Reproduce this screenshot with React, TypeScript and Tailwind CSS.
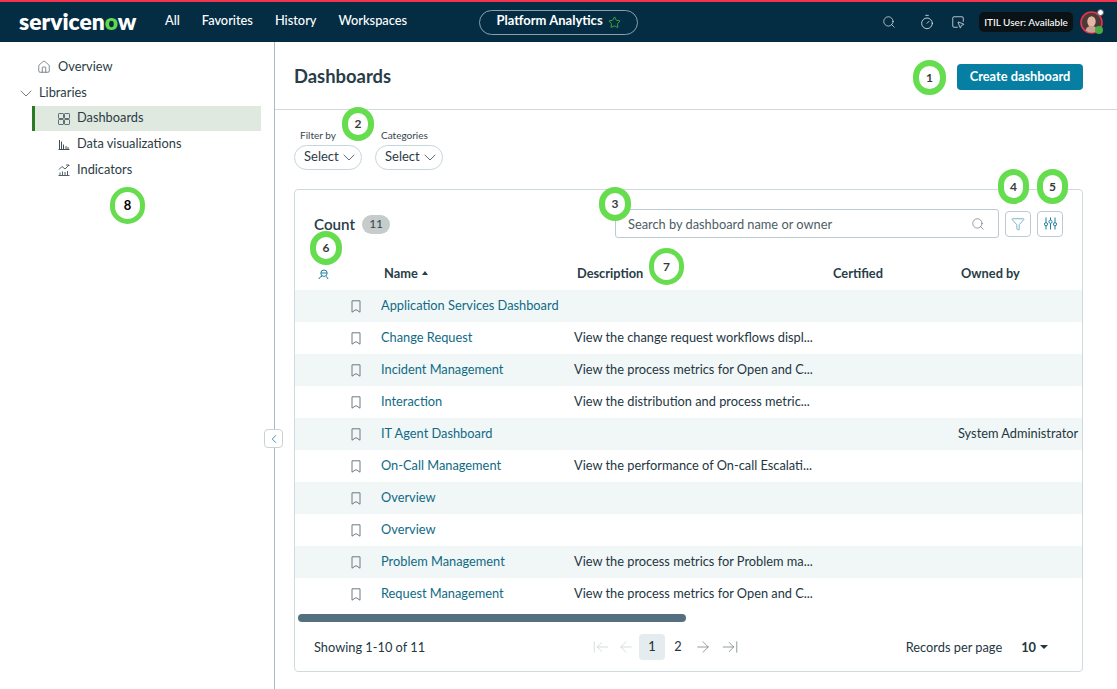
import { ArrowLeft, ArrowLeftToLine, ArrowRight, ArrowRightToLine, ChevronLeft, Filter, House, Search, Star, SquareMousePointer, Timer } from 'lucide-react';

const rows = [
  { name: 'Application Services Dashboard', desc: '', owner: '' },
  { name: 'Change Request', desc: 'View the change request workflows displ...', owner: '' },
  { name: 'Incident Management', desc: 'View the process metrics for Open and C...', owner: '' },
  { name: 'Interaction', desc: 'View the distribution and process metric...', owner: '' },
  { name: 'IT Agent Dashboard', desc: '', owner: 'System Administrator' },
  { name: 'On-Call Management', desc: 'View the performance of On-call Escalati...', owner: '' },
  { name: 'Overview', desc: '', owner: '' },
  { name: 'Overview', desc: '', owner: '' },
  { name: 'Problem Management', desc: 'View the process metrics for Problem ma...', owner: '' },
  { name: 'Request Management', desc: 'View the process metrics for Open and C...', owner: '' },
];

// numbered callouts that sit on top of the screenshot
const markers = [
  { n: 1, pos: 'left-[913px] top-[60px] h-[35px] w-[33px] border-[6px] text-[12px] text-[#3b3b3b]' },
  { n: 2, pos: 'left-[342px] top-[107px] h-[34px] w-[32px] border-[6px] text-[12px] text-[#3b3b3b]' },
  { n: 3, pos: 'left-[599px] top-[187px] h-[34px] w-[32px] border-[6px] text-[12px] text-[#3b3b3b]' },
  { n: 4, pos: 'left-[998px] top-[169px] h-[35px] w-[31px] border-[6px] text-[12px] text-[#3b3b3b]' },
  { n: 5, pos: 'left-[1037px] top-[169px] h-[35px] w-[31px] border-[6px] text-[12px] text-[#3b3b3b]' },
  { n: 6, pos: 'left-[310px] top-[231px] h-[34px] w-[32px] border-[6px] text-[12px] text-[#3b3b3b]' },
  { n: 7, pos: 'left-[649px] top-[248px] h-[37px] w-[35px] border-[5px] text-[12px] text-[#3b3b3b]' },
  { n: 8, pos: 'left-[110px] top-[187px] h-[37px] w-[35px] border-[5px] text-[13px] text-black' },
];

function ChevronIcon({ color }: { color: string }) {
  return (
    <svg width="12" height="7" viewBox="0 0 12 7" fill="none" stroke={color} strokeWidth="0.9">
      <path d="M.7.8 6 6l5.3-5.2" />
    </svg>
  );
}

function BookmarkIcon() {
  return (
    <svg width="10" height="13" viewBox="0 0 10 13" fill="none" stroke="#6f7b81" strokeWidth="1">
      <path d="M1 .8h8v11.4L5 9.6l-4 2.6z" />
    </svg>
  );
}

function GridIcon() {
  return (
    <svg width="12" height="12" viewBox="0 0 12 12" fill="none" stroke="#5f6e75" strokeWidth="1">
      <rect x=".5" y=".5" width="5" height="5" rx=".6" />
      <rect x="6.5" y=".5" width="5" height="5" rx=".6" />
      <rect x=".5" y="6.5" width="5" height="5" rx=".6" />
      <rect x="6.5" y="6.5" width="5" height="5" rx=".6" />
    </svg>
  );
}

function BarsIcon() {
  return (
    <svg width="12" height="12" viewBox="0 0 12 12" fill="none" stroke="#3f4e55" strokeWidth="1">
      <path d="M.5 11.5h11M1.5 11V2M3.5 11V3.5M5.5 11V6.5M8 11V8M10 11V9" />
    </svg>
  );
}

function IndicatorIcon() {
  return (
    <svg width="12" height="12" viewBox="0 0 12 12" fill="none" stroke="#3f4e55" strokeWidth=".9">
      <path d="M.5 11.5h11M2 11V8.5M4.5 11V7.5M7 11V8M9.5 11V7M1 5.5l3-3 3 2.5 4-4M8 1h3v1" />
    </svg>
  );
}

function PersonalizeIcon() {
  return (
    <svg width="11" height="11" viewBox="0 0 11 11" fill="none" stroke="#1d7f9e" strokeWidth="1">
      <circle cx="6" cy="4.2" r="3.2" />
      <path d="M1 10c.4-1.6 1.5-2.4 3-2.6M8 7.5c1 .4 1.7 1.2 2 2.5M3 4h6" />
    </svg>
  );
}

function SlidersIcon() {
  return (
    <svg width="13" height="13" viewBox="0 0 13 13" fill="none" stroke="#1d7f9e" strokeWidth="1">
      <path d="M2 .5v5M2 9v3.5M6.5.5V3M6.5 6.5v6M11 .5v5M11 9v3.5" />
      <circle cx="2" cy="7.2" r="1.6" />
      <circle cx="6.5" cy="4.7" r="1.6" />
      <circle cx="11" cy="7.2" r="1.6" />
    </svg>
  );
}

function Avatar() {
  return (
    <div className="relative h-[23px] w-[23px]">
      <svg width="23" height="23" viewBox="0 0 23 23">
        <circle cx="11.5" cy="11.5" r="10.5" fill="#4b3a35" stroke="#ee2f4b" strokeWidth="1.6" />
        <ellipse cx="11.5" cy="10.5" rx="4.2" ry="5.2" fill="#e2b7a3" />
        <path d="M5.5 19.5c1-3.5 3-4.5 6-4.5s5 1 6 4.5a10 10 0 0 1-12 0z" fill="#c9a295" />
      </svg>
      <span className="absolute right-[-1px] top-[-2px] h-[7px] w-[7px] rounded-full border border-[#4b5f6a] bg-white" />
      <span className="absolute bottom-0 right-0 h-[8px] w-[8px] rounded-full bg-[#49a942]" />
    </div>
  );
}

function SelectBox({ label }: { label: string }) {
  return (
    <div className="flex flex-col">
      <span className="pl-[6px] text-[10px] leading-[13px] text-[#36474f]">{label}</span>
      <div className="mt-[3px] flex h-[25px] w-[68px] items-center gap-[4px] rounded-full border border-[#c7d6dc] pl-[9px] text-[13px] text-[#2b3c45]">
        <span className="mb-[2px]">Select</span>
        <ChevronIcon color="#4c5d66" />
      </div>
    </div>
  );
}

export default function App() {
  return (
    <div className="relative h-[689px] w-[1117px] overflow-hidden bg-white font-['Lato',sans-serif] text-[#25363f]">
      {/* top bar */}
      <header className="flex h-[42px] items-center border-t-2 border-[#f2324e] bg-[#042d44] text-white">
        <div className="ml-[19px] mb-[2px] w-[146px] text-[22.8px] font-extrabold leading-none">
          servicen<span className="text-[#62d84e]">o</span>w
        </div>
        <nav className="mb-[2px] flex items-center gap-[22px] text-[12.8px] font-medium">
          <span>All</span>
          <span>Favorites</span>
          <span>History</span>
          <span>Workspaces</span>
        </nav>
        <div className="ml-[72px] flex h-[25px] w-[159px] items-center justify-center gap-[5px] rounded-full border border-[#8ca0ac] text-[13px] font-bold">
          <span className="mb-[2px]">Platform Analytics</span>
          <Star size={13} strokeWidth={1.5} className="text-[#45c13a]" />
        </div>
        <div className="ml-auto flex items-center pr-[14px]">
          <Search size={14} strokeWidth={1.1} />
          <Timer size={16} strokeWidth={1.1} className="ml-[23px]" />
          <SquareMousePointer size={14} strokeWidth={1.2} className="ml-[16px]" />
          <div className="ml-[14px] flex h-[20px] w-[94px] items-center justify-center rounded-[5px] bg-[#0b1216] text-[10px] font-medium">
            ITIL User: Available
          </div>
          <div className="ml-[7px]">
            <Avatar />
          </div>
        </div>
      </header>

      <div className="flex h-[647px]">
        {/* left nav */}
        <aside className="w-[275px] shrink-0 border-r border-[#a9bac2] pt-[12px] text-[12.8px] text-[#2b3c45]">
          <div className="flex h-[26px] items-center pl-[37px]">
            <House size={14} strokeWidth={1} />
            <span className="ml-[7px]">Overview</span>
          </div>
          <div className="flex h-[26px] items-center pl-[20px]">
            <ChevronIcon color="#5f6e75" />
            <span className="ml-[7px]">Libraries</span>
          </div>
          <div className="ml-[32px] flex h-[25px] w-[229px] items-center border-l-[3px] border-[#2d7a25] bg-[#e0e9df] pl-[23px]">
            <GridIcon />
            <span className="mb-[2px] ml-[7px]">Dashboards</span>
          </div>
          <div className="flex h-[26px] items-center pl-[58px]">
            <BarsIcon />
            <span className="ml-[7px]">Data visualizations</span>
          </div>
          <div className="flex h-[26px] items-center pl-[58px]">
            <IndicatorIcon />
            <span className="ml-[7px]">Indicators</span>
          </div>
        </aside>

        {/* main */}
        <main className="min-w-0 flex-1">
          <div className="flex h-[68px] items-center justify-between border-b border-[#d4d8da] pl-[19px] pr-[34px] pt-[2px]">
            <h1 className="mt-[1px] text-[18.4px] font-bold text-[#283d48]">Dashboards</h1>
            <button className="h-[26px] w-[126px] rounded-[4px] bg-[#067fa3] pt-[1px] text-[12.8px] font-bold text-white">
              Create dashboard
            </button>
          </div>

          <div className="ml-[19px] mt-[19px] flex gap-[13px]">
            <SelectBox label="Filter by" />
            <SelectBox label="Categories" />
          </div>

          <section className="ml-[19px] mt-[19px] h-[483px] w-[789px] rounded-[4px] border border-[#cfdade]">
            <div className="flex h-[68px] items-start pl-[19px] pt-[19px]">
              <div className="mt-[4px] flex items-center">
                <span className="text-[15.2px] font-semibold text-[#283d48]">Count</span>
                <span className="ml-[7px] flex h-[19px] w-[28px] items-center justify-center rounded-full bg-[#c6cbcc] text-[12px] text-[#34444c]">
                  11
                </span>
              </div>
              <div className="ml-auto flex items-center pr-[19px]">
                <div className="flex h-[29px] w-[384px] items-center justify-between rounded-[3px] border border-[#bccbd2] pl-[12px] pr-[13px] text-[12.8px] text-[#4c5d66]">
                  <span className="mt-[2px]">Search by dashboard name or owner</span>
                  <Search size={14} strokeWidth={1} />
                </div>
                <div className="ml-[6px] flex h-[26px] w-[26px] items-center justify-center rounded-[4px] border border-[#bccbd2]">
                  <Filter size={14} strokeWidth={1} className="text-[#1d7f9e]" />
                </div>
                <div className="ml-[6px] flex h-[26px] w-[26px] items-center justify-center rounded-[4px] border border-[#bccbd2]">
                  <SlidersIcon />
                </div>
              </div>
            </div>

            {/* table head */}
            <div className="grid h-[32px] grid-cols-[83px_193px_256px_128px_1fr] items-center text-[12.8px] font-bold text-[#283d48]">
              <div className="pl-[23px]">
                <PersonalizeIcon />
              </div>
              <div className="flex items-center gap-[4px] pl-[6px]">
                Name
                <span className="mb-[2px] h-0 w-0 border-x-[3.5px] border-b-[4px] border-x-transparent border-b-[#283d48]" />
              </div>
              <div className="pl-[6px]">Description</div>
              <div className="pl-[6px]">Certified</div>
              <div className="pl-[6px]">Owned by</div>
            </div>

            {/* table body */}
            {rows.map((row, i) => (
              <div
                key={row.name + i}
                className={`grid h-[32px] grid-cols-[83px_193px_256px_128px_1fr] items-center text-[12.8px] ${
                  i % 2 === 0 ? 'bg-[#f1f7f7]' : 'bg-white'
                }`}
              >
                <div className="flex pl-[56px] pt-[1px]">
                  <BookmarkIcon />
                </div>
                <div className="whitespace-nowrap pl-[3px] text-[#0f6a85]">{row.name}</div>
                <div className="whitespace-nowrap pl-[3px] text-[#25363f]">{row.desc}</div>
                <div />
                <div className="whitespace-nowrap pl-[3px] text-[#25363f]">{row.owner}</div>
              </div>
            ))}

            {/* horizontal scrollbar */}
            <div className="pl-[3px] pt-[4px]">
              <div className="h-[8px] w-[388px] rounded-full bg-[#546f80]" />
            </div>

            {/* pagination */}
            <div className="mt-[12px] flex h-[26px] items-center pl-[19px] pr-[34px] text-[12.8px]">
              <span className="mt-[1px] w-[278px]">Showing 1-10 of 11</span>
              <div className="flex items-center">
                <ArrowLeftToLine size={18} strokeWidth={0.9} className="text-[#c4ccd0]" />
                <ArrowLeft size={18} strokeWidth={0.9} className="ml-[7px] text-[#c4ccd0]" />
                <span className="ml-[4px] flex h-[26px] w-[26px] items-center justify-center rounded-[4px] bg-[#e4ecef] font-medium">
                  1
                </span>
                <span className="flex h-[26px] w-[26px] items-center justify-center">2</span>
                <ArrowRight size={18} strokeWidth={0.9} className="ml-[3px] text-[#5d6d75]" />
                <ArrowRightToLine size={18} strokeWidth={0.9} className="ml-[9px] text-[#5d6d75]" />
              </div>
              <span className="ml-auto mt-[1px]">Records per page</span>
              <span className="ml-[19px] mt-[1px] font-bold">10</span>
              <span className="ml-[4px] h-0 w-0 border-x-[4px] border-t-[4px] border-x-transparent border-t-[#25363f]" />
            </div>
          </section>
        </main>
      </div>

      {/* sidebar collapse handle */}
      <div className="absolute left-[264px] top-[429px] flex h-[19px] w-[19px] items-center justify-center rounded-[4px] border border-[#c8d2d5] bg-white">
        <ChevronLeft size={14} strokeWidth={1.4} className="text-[#1d7f9e]" />
      </div>

      {markers.map((m) => (
        <div
          key={m.n}
          className={`absolute flex items-center justify-center rounded-full border-[#66dd4f] bg-white font-bold ${m.pos}`}
        >
          {m.n}
        </div>
      ))}
    </div>
  );
}
